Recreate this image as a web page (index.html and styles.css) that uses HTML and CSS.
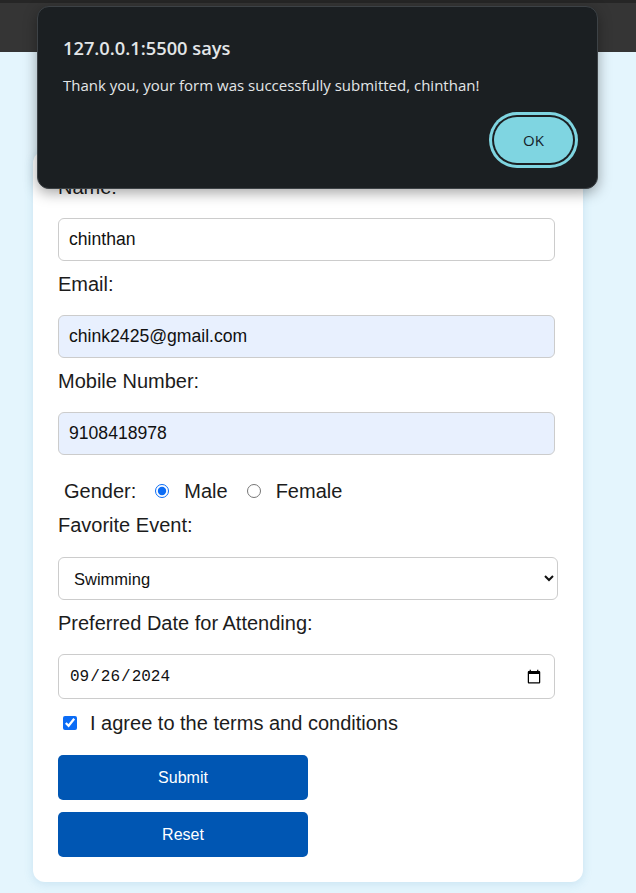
FILE: index.html
```html
<!DOCTYPE html>
<html lang="en">
<head>
<meta charset="utf-8">
<title>Event Registration</title>
<link rel="stylesheet" href="styles.css">
</head>
<body>
<div class="topbar"></div>
<main class="page">
  <form class="card">
    <label class="field-label" for="name">Name:</label>
    <input class="text-input" id="name" type="text" value="chinthan">

    <label class="field-label" for="email">Email:</label>
    <input class="text-input autofilled" id="email" type="email" value="chink2425@gmail.com">

    <label class="field-label" for="mobile">Mobile Number:</label>
    <input class="text-input autofilled last-input" id="mobile" type="tel" value="9108418978">

    <div class="gender-row">
      <span class="gender-title">Gender:</span>
      <input class="radio" type="radio" name="gender" id="male" checked>
      <label class="radio-label" for="male">Male</label>
      <input class="radio" type="radio" name="gender" id="female">
      <label class="radio-label" for="female">Female</label>
    </div>

    <label class="field-label" for="event">Favorite Event:</label>
    <select class="select-input" id="event">
      <option>Swimming</option>
      <option>Running</option>
      <option>Cycling</option>
    </select>

    <label class="field-label" for="date">Preferred Date for Attending:</label>
    <input class="date-input" id="date" type="date" value="2024-09-26">

    <div class="terms-row">
      <input class="check" type="checkbox" id="terms" checked>
      <label class="terms-label" for="terms">I agree to the terms and conditions</label>
    </div>

    <button class="btn btn-submit" type="button">Submit</button>
    <button class="btn btn-reset" type="button">Reset</button>
  </form>
</main>

<div class="dialog" role="alertdialog">
  <div class="dialog-title">127.0.0.1:5500 says</div>
  <div class="dialog-msg">Thank you, your form was successfully submitted, chinthan!</div>
  <div class="dialog-actions">
    <button class="dialog-ok" type="button">OK</button>
  </div>
</div>
</body>
</html>
```

FILE: styles.css
```css
* { box-sizing: border-box; }

html, body {
  margin: 0;
  padding: 0;
}

body {
  background: #e4f5fd;
  font-family: "Liberation Sans", Arial, sans-serif;
  color: #1c1c1c;
  width: 636px;
  height: 893px;
  overflow: hidden;
  position: relative;
}

.topbar {
  height: 52px;
  background: #353535;
  border-top: 3px solid #262626;
}

.page {
  padding: 99px 0 0 33px;
}

.card {
  width: 550px;
  background: #ffffff;
  border-radius: 12px;
  padding: 25px;
  box-shadow: 0 2px 10px rgba(80, 150, 190, 0.18);
  display: flex;
  flex-direction: column;
  align-items: flex-start;
}

.field-label {
  display: block;
  font-size: 20px;
  line-height: 23px;
  margin: 0;
}

.text-input {
  display: block;
  width: 497px;
  height: 43px;
  margin: 18.5px 0 12.5px 0;
  padding: 0 10px;
  border: 1px solid #cccccc;
  border-radius: 6px;
  background: #ffffff;
  font-family: "Liberation Sans", Arial, sans-serif;
  font-size: 17.6px;
  color: #111;
  outline: none;
}

.text-input.autofilled {
  background: #e8f0fe;
}

.text-input.last-input { margin-bottom: 25px; }

.gender-row {
  display: flex;
  align-items: center;
  height: 23px;
  font-size: 20px;
  margin-bottom: 11px;
}

.gender-title {
  margin-left: 6px;
}

.radio {
  width: 14px;
  height: 14px;
  margin: 0 15px 0 19px;
  accent-color: #0b6cf5;
}

.select-input {
  display: block;
  width: 500px;
  height: 43px;
  margin: 20.5px 0 11.5px 0;
  padding: 0 11px;
  border: 1px solid #cccccc;
  border-radius: 6px;
  background: #ffffff;
  font-family: "Liberation Sans", Arial, sans-serif;
  font-size: 16.5px;
  color: #111;
}

.date-input {
  display: block;
  width: 497px;
  height: 45px;
  margin: 19.5px 0 12.5px 0;
  padding: 0 10px;
  border: 1px solid #cccccc;
  border-radius: 6px;
  background: #ffffff;
  font-family: "Liberation Mono", monospace;
  font-size: 16px;
  color: #111;
}

.terms-row {
  display: flex;
  align-items: center;
  height: 23px;
  font-size: 20px;
  margin-bottom: 20.5px;
}

.check {
  width: 14px;
  height: 14px;
  margin: 0 13px 0 5px;
  accent-color: #0b6cf5;
}

.btn {
  width: 250px;
  height: 45px;
  border: none;
  border-radius: 5px;
  background: #0056b3;
  color: #ffffff;
  font-family: "Liberation Sans", Arial, sans-serif;
  font-size: 16px;
  cursor: pointer;
}

.btn-reset {
  margin-top: 12px;
}

/* alert dialog overlay */
.dialog {
  position: absolute;
  top: 6px;
  left: 37px;
  width: 561px;
  height: 183px;
  background: #1b1f22;
  border: 1px solid #3d4246;
  border-radius: 12px;
  box-shadow: 0 4px 14px rgba(0, 0, 0, 0.35);
  padding: 29px 20px 0 25px;
  font-family: "Open Sans", "Noto Sans", sans-serif;
  color: #e3e6e8;
}

.dialog-title {
  font-size: 18.3px;
  font-weight: 600;
  line-height: 24px;
}

.dialog-msg {
  margin-top: 15px;
  font-size: 15px;
  line-height: 20px;
}

.dialog-actions {
  display: flex;
  justify-content: flex-end;
  margin-top: 22px;
}

.dialog-ok {
  width: 79px;
  height: 46px;
  margin-right: 4px;
  border: none;
  border-radius: 23px;
  background: #7fd5e1;
  color: #14222a;
  font-family: "Open Sans", "Noto Sans", sans-serif;
  font-size: 15px;
  box-shadow: 0 0 0 2px #1b1f22, 0 0 0 5px #7fd5e1;
}
```
